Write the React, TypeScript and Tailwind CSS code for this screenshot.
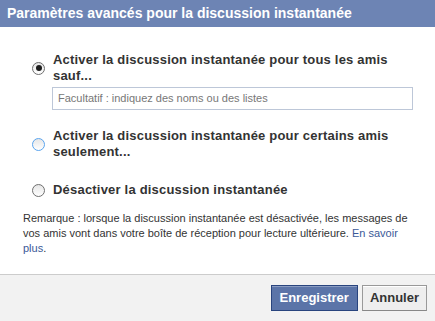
import React, { useState } from "react";

type Option = { id: string; label: string };

const options: Option[] = [
  { id: "all", label: "Activer la discussion instantanée pour tous les amis sauf..." },
  { id: "some", label: "Activer la discussion instantanée pour certains amis seulement..." },
  { id: "off", label: "Désactiver la discussion instantanée" },
];

function Radio({ checked, focused }: { checked: boolean; focused?: boolean }) {
  return (
    <span
      className={`flex h-[13px] w-[13px] shrink-0 items-center justify-center rounded-full border bg-gradient-to-b from-[#e6e6e6] to-white ${
        focused ? "border-[#5aa4ee]" : "border-[#6f6f6f]"
      }`}
    >
      {checked && <span className="h-[6px] w-[6px] rounded-full bg-[#1c1c1c]" />}
    </span>
  );
}

export default function App() {
  const [selected, setSelected] = useState("all");

  return (
    <div className="flex h-[321px] w-[435px] flex-col bg-white font-['Liberation_Sans',Arial,sans-serif] text-[#333]">
      <div className="flex h-[27px] items-center bg-[#6d84b4] px-[7px] text-[14px] font-bold text-white">
        Paramètres avancés pour la discussion instantanée
      </div>

      <div className="flex flex-1 flex-col px-[23px] pt-[25px]">
        <div className="ml-[9px] flex flex-col">
          {options.map((opt, i) => (
            <div
              key={opt.id}
              className={i === 1 ? "mt-[18px]" : i === 2 ? "mt-[22px]" : ""}
            >
              <label
                className="flex cursor-pointer items-center gap-[8px]"
                onClick={() => setSelected(opt.id)}
              >
                <Radio checked={selected === opt.id} focused={i === 1} />
                <span className="w-[358px] text-[13px] font-bold leading-[16px] tracking-[0.2px] text-[#333]">
                  {opt.label}
                </span>
              </label>
              {i === 0 && (
                <div className="ml-[20px] mt-[3px] flex h-[23px] w-[361px] items-center border border-[#bdc7d8] bg-white px-[5px] text-[11px] text-[#777]">
                  Facultatif : indiquez des noms ou des listes
                </div>
              )}
            </div>
          ))}
        </div>

        <p className="mt-[13px] w-[390px] text-[11px] leading-[15px] text-[#333]">
          Remarque : lorsque la discussion instantanée est désactivée, les messages de vos amis vont dans votre boîte de réception pour lecture ultérieure.{" "}
          <a className="text-[#3b5998]">En savoir</a> <a className="text-[#3b5998]">plus</a>.
        </p>
      </div>

      <div className="flex h-[47px] items-center justify-end gap-[4px] border-t border-[#cccccc] bg-[#f2f2f2] pr-[8px] pb-[1px]">
        <button className="h-[26px] border border-[#29447e] bg-[#5b74a8] px-[8px] text-[13px] font-bold text-white shadow-[inset_0_1px_0_#8a9cc2]">
          Enregistrer
        </button>
        <button className="h-[26px] border border-[#999] border-b-[#888] bg-[#eeeeee] px-[7px] text-[13px] font-bold text-[#333] shadow-[inset_0_1px_0_#fff]">
          Annuler
        </button>
      </div>
    </div>
  );
}
